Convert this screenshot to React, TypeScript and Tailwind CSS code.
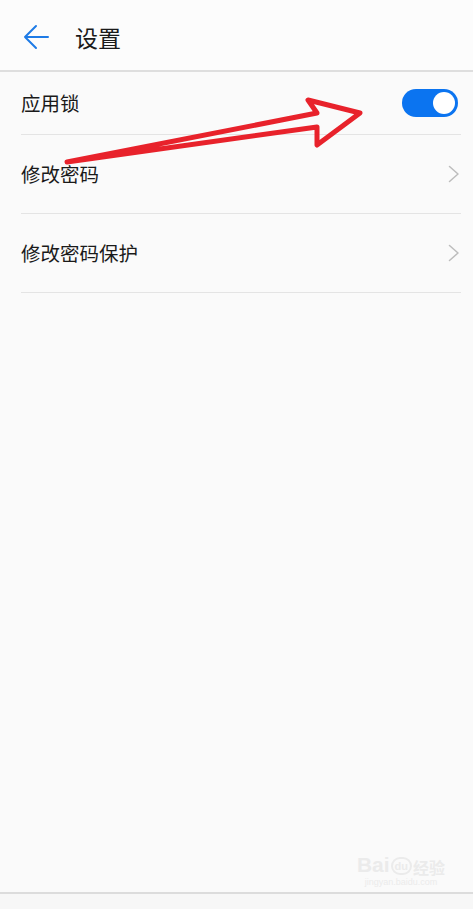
const ROWS = ['修改密码', '修改密码保护']

export default function App() {
  return (
    <div className="relative w-[473px] h-[909px] overflow-hidden bg-[#fafafa] text-[#1a1a1a] [font-family:'Noto_Sans_CJK_SC',sans-serif]">
      {/* Header */}
      <header className="h-[72px] bg-[#fcfcfc] border-b-2 border-[#dedede] flex items-center pt-1">
        <button className="ml-[22px] w-[28px] h-[28px] flex items-center justify-center">
          <svg width="26" height="26" viewBox="0 0 26 26" fill="none" stroke="#1e7be6" strokeWidth="2" strokeLinecap="round" strokeLinejoin="round">
            <path d="M25 13H2M13 2L2 13l11 11" />
          </svg>
        </button>
        <h1 className="ml-[25px] text-[23px] leading-none">设置</h1>
      </header>

      {/* List */}
      <div className="pl-[21px] pr-[12px]">
        <div className="h-[63px] flex items-center justify-between border-b border-[#e4e4e4]">
          <span className="text-[19.5px] leading-none">应用锁</span>
          <div className="w-[56px] h-[28px] mr-[3px] rounded-full bg-[#0b74f0] flex items-center justify-end pr-[3px]">
            <div className="w-[22px] h-[22px] rounded-full bg-white" />
          </div>
        </div>
        {ROWS.map(label => (
          <div key={label} className="h-[79px] flex items-center justify-between border-b border-[#e4e4e4]">
            <span className="text-[19.5px] leading-none">{label}</span>
            <svg width="12" height="18" viewBox="0 0 12 18" fill="none" stroke="#bdbdbd" strokeWidth="1.5" strokeLinecap="round" strokeLinejoin="round" className="mr-[1px]">
              <path d="M1.5 1.5L10 9l-8.5 7.5" />
            </svg>
          </div>
        ))}
      </div>

      {/* Bottom bar */}
      <div className="absolute left-0 right-0 top-[892px] h-[17px] border-t-2 border-[#dcdcdc] bg-[#f7f7f7]" />

      {/* Watermark */}
      <div className="absolute left-[355px] top-[854px] w-[92px] flex flex-col items-center text-[#ebebeb] [font-family:'Liberation_Sans',sans-serif]">
        <div className="flex items-end text-[21px] leading-none font-bold">
          <span>Bai</span>
          <span className="text-[11px] mx-[1px] rounded-full border-2 border-[#ebebeb] px-[2px] leading-[14px]">du</span>
          <span className="text-[16px] [font-family:'Noto_Sans_CJK_SC',sans-serif]">经验</span>
        </div>
        <span className="text-[9px] leading-none mt-[3px]">jingyan.baidu.com</span>
      </div>

      {/* Annotation arrow */}
      <svg className="absolute left-0 top-0 pointer-events-none" width="473" height="909" viewBox="0 0 473 909" fill="none">
        <path
          d="M67 162 L317 113 L308 100 L360 113 L317 145 L317 127 Z"
          stroke="#e8222b"
          strokeWidth="5"
          strokeLinejoin="round"
          strokeLinecap="round"
        />
      </svg>
    </div>
  )
}
